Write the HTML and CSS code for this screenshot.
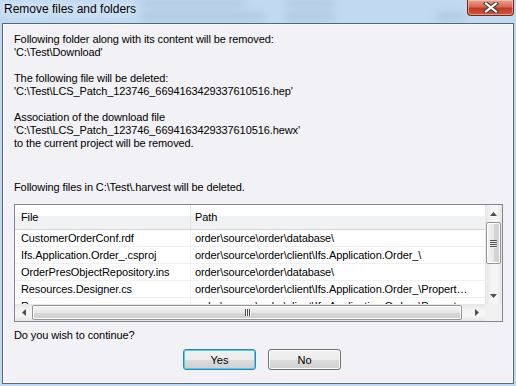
FILE: index.html
```html
<!DOCTYPE html>
<html lang="en">
<head>
  <meta charset="UTF-8">
  <title>Remove files and folders</title>
  <link rel="stylesheet" href="styles.css">
</head>
<body>
  <div class="backdrop">
    <span class="blob b1"></span>
    <span class="blob b2"></span>
    <span class="blob b3"></span>
    <span class="blob b4"></span>
    <span class="blob b5"></span>
  </div>
  <div class="window">
    <div class="titlebar">
      <span class="title">Remove files and folders</span>
      <button class="close-button" title="Close">
        <svg width="16" height="11" viewBox="0 0 16 11">
          <path d="M3 1.5 L13 9.5 M13 1.5 L3 9.5" stroke="#3a3a3a" stroke-width="4.2" stroke-linecap="square" fill="none"/>
          <path d="M3 1.5 L13 9.5 M13 1.5 L3 9.5" stroke="#ffffff" stroke-width="2.2" stroke-linecap="square" fill="none"/>
        </svg>
      </button>
    </div>

    <div class="client">
      <p>Following folder along with its content will be removed:<br>'C:\Test\Download'</p>
      <p>The following file will be deleted:<br>'C:\Test\LCS_Patch_123746_6694163429337610516.hep'</p>
      <p>Association of the download file<br>'C:\Test\LCS_Patch_123746_6694163429337610516.hewx'<br>to the current project will be removed.</p>

      <p class="files-label">Following files in C:\Test\.harvest will be deleted.</p>

      <div class="listbox">
        <div class="list-main">
          <div class="list-view">
            <div class="list-row list-header">
              <div class="cell col-file">File</div>
              <div class="cell col-path">Path</div>
            </div>
            <div class="list-row">
              <div class="cell col-file">CustomerOrderConf.rdf</div>
              <div class="cell col-path">order\source\order\database\</div>
            </div>
            <div class="list-row">
              <div class="cell col-file">Ifs.Application.Order_.csproj</div>
              <div class="cell col-path">order\source\order\client\Ifs.Application.Order_\</div>
            </div>
            <div class="list-row">
              <div class="cell col-file">OrderPresObjectRepository.ins</div>
              <div class="cell col-path">order\source\order\database\</div>
            </div>
            <div class="list-row">
              <div class="cell col-file">Resources.Designer.cs</div>
              <div class="cell col-path">order\source\order\client\Ifs.Application.Order_\Properties\</div>
            </div>
            <div class="list-row">
              <div class="cell col-file">Resources.resx</div>
              <div class="cell col-path">order\source\order\client\Ifs.Application.Order_\Properties\</div>
            </div>
          </div>
          <div class="vscroll">
            <div class="arrow">
              <svg width="7" height="4" viewBox="0 0 7 4"><path d="M0 4 L3.5 0 L7 4 Z" fill="#4d4d4d"/></svg>
            </div>
            <div class="vthumb">
              <span class="grip-h"></span><span class="grip-h"></span><span class="grip-h"></span><span class="grip-h"></span>
            </div>
            <div class="track"></div>
            <div class="arrow">
              <svg width="7" height="4" viewBox="0 0 7 4"><path d="M0 0 L7 0 L3.5 4 Z" fill="#4d4d4d"/></svg>
            </div>
          </div>
        </div>
        <div class="list-bottom">
          <div class="hscroll">
            <div class="arrow">
              <svg width="4" height="7" viewBox="0 0 4 7"><path d="M4 0 L4 7 L0 3.5 Z" fill="#4d4d4d"/></svg>
            </div>
            <div class="hthumb">
              <span class="grip-v"></span><span class="grip-v"></span><span class="grip-v"></span>
            </div>
            <div class="track"></div>
            <div class="arrow">
              <svg width="4" height="7" viewBox="0 0 4 7"><path d="M0 0 L4 3.5 L0 7 Z" fill="#4d4d4d"/></svg>
            </div>
          </div>
          <div class="corner"></div>
        </div>
      </div>

      <p class="question">Do you wish to continue?</p>

      <div class="buttons">
        <button class="dlg-button default">Yes</button>
        <button class="dlg-button">No</button>
      </div>
    </div>
  </div>
</body>
</html>
```

FILE: styles.css
```css
body {
  margin: 0;
  width: 516px;
  height: 386px;
  overflow: hidden;
  background: #c2daf1;
  font-family: "Liberation Sans", Arial, sans-serif;
  font-size: 11px;
  color: #000;
  position: relative;
}

/* blurred windows behind the glass frame */
.backdrop {
  position: absolute;
  inset: 0;
  overflow: hidden;
}
.blob {
  position: absolute;
  background: #9fb6cf;
  filter: blur(4px);
  border-radius: 4px;
  opacity: 0.6;
}
.b1 { left: 140px; top: 0; width: 105px; height: 6px; }
.b2 { left: 285px; top: 0; width: 50px; height: 6px; }
.b3 { left: 140px; top: 13px; width: 125px; height: 7px; }
.b4 { left: 285px; top: 13px; width: 50px; height: 7px; }
.b5 { left: 435px; top: 13px; width: 30px; height: 7px; }

.window {
  position: relative;
  display: flex;
  flex-direction: column;
  height: 386px;
}

.titlebar {
  height: 23px;
  display: flex;
  justify-content: space-between;
  align-items: flex-start;
}
.title {
  font-family: "Liberation Sans", Arial, sans-serif;
  font-size: 12px;
  color: #000;
  margin: 1px 0 0 4px;
  line-height: 16px;
  text-shadow: 0 0 6px #e8f2fc, 0 0 8px #e8f2fc;
}
.close-button {
  width: 47px;
  height: 16px;
  margin-right: 2px;
  padding: 0;
  border: 1px solid #6b2a24;
  border-top: none;
  border-radius: 0 0 4px 4px;
  background: linear-gradient(#e8a08e 0%, #d66a52 45%, #c23a22 55%, #d2583d 100%);
  box-shadow: inset 0 0 0 1px rgba(255, 220, 210, 0.5);
  display: flex;
  align-items: center;
  justify-content: center;
}

.client {
  flex: 1;
  margin: 0 2px 2px 2px;
  border: 1px solid #56657a;
  box-shadow: inset 0 0 0 1px #fbfbfd;
  background: #f2f1f5;
  padding: 9px 11px 0 11px;
  letter-spacing: -0.1px;
}

.client p {
  margin: 0 0 13px 0;
  line-height: 13px;
}
.client p.files-label {
  margin: 31px 0 10px 0;
}
.client p.question {
  margin: 7px 0 7px 0;
}

.listbox {
  width: 487px;
  border: 1px solid #828790;
  background: #fff;
}
.list-main {
  display: flex;
  height: 99px;
}
.list-view {
  flex: 1;
  overflow: hidden;
}
.list-row {
  display: flex;
  height: 17px;
  border-bottom: 1px solid #f0f0f0;
  box-sizing: border-box;
}
.list-header {
  height: 25px;
  border-bottom: 1px solid #d5d5d5;
  background: linear-gradient(#ffffff 0%, #ffffff 45%, #f1f2f4 45%, #f1f2f4 100%);
  align-items: center;
}
.cell {
  white-space: nowrap;
  overflow: hidden;
  text-overflow: ellipsis;
  line-height: 16px;
}
.col-file {
  width: 176px;
  padding-left: 6px;
  box-sizing: border-box;
  border-right: 1px solid #f0f0f0;
}
.list-header .col-file {
  border-right: 1px solid #e3e5e8;
  line-height: 24px;
}
.col-path {
  flex: 1;
  padding-left: 4px;
  padding-right: 16px;
}

.vscroll {
  width: 17px;
  display: flex;
  flex-direction: column;
  background: linear-gradient(90deg, #e6e6e6, #f5f5f5 40%, #f5f5f5 70%, #e6e6e6);
}
.vscroll .arrow {
  height: 17px;
  display: flex;
  align-items: center;
  justify-content: center;
}
.vscroll .track {
  flex: 1;
}
.vthumb {
  height: 40px;
  margin: 0 1px;
  border: 1px solid #959595;
  border-radius: 2px;
  background: linear-gradient(90deg, #f3f3f3, #e8e8e8 50%, #d6d6d6 51%, #cfcfcf);
  box-shadow: inset 0 0 0 1px #fdfdfd;
  display: flex;
  flex-direction: column;
  align-items: center;
  justify-content: center;
  gap: 1px;
}
.grip-h {
  width: 7px;
  height: 1px;
  background: #4f4f4f;
  box-shadow: 0 1px 0 #f0f0f0;
}

.list-bottom {
  display: flex;
  height: 17px;
}
.hscroll {
  flex: 1;
  display: flex;
  background: linear-gradient(#e6e6e6, #f5f5f5 40%, #f5f5f5 70%, #e6e6e6);
}
.hscroll .arrow {
  width: 17px;
  display: flex;
  align-items: center;
  justify-content: center;
}
.hscroll .track {
  width: 6px;
}
.hthumb {
  flex: 1;
  margin: 1px 0;
  border: 1px solid #959595;
  border-radius: 2px;
  background: linear-gradient(#f3f3f3, #e8e8e8 50%, #d6d6d6 51%, #cfcfcf);
  box-shadow: inset 0 0 0 1px #fdfdfd;
  display: flex;
  align-items: center;
  justify-content: center;
  gap: 1px;
}
.grip-v {
  width: 1px;
  height: 7px;
  background: #4f4f4f;
  box-shadow: 1px 0 0 #f0f0f0;
}
.corner {
  width: 17px;
  background: #f0f0f0;
}

.buttons {
  display: flex;
  justify-content: center;
  gap: 12px;
  padding-left: 8px;
}
.dlg-button {
  width: 73px;
  height: 21px;
  padding: 0;
  font-family: "Liberation Sans", Arial, sans-serif;
  font-size: 11px;
  color: #000;
  border: 1px solid #707070;
  border-radius: 3px;
  background: linear-gradient(#f2f2f2 0%, #ebebeb 50%, #dddddd 51%, #cfcfcf 100%);
  box-shadow: inset 0 0 0 1px #fcfcfc;
}
.dlg-button.default {
  border-color: #3c7fb1;
  box-shadow: inset 0 0 0 1px #48d1f8;
}
```
